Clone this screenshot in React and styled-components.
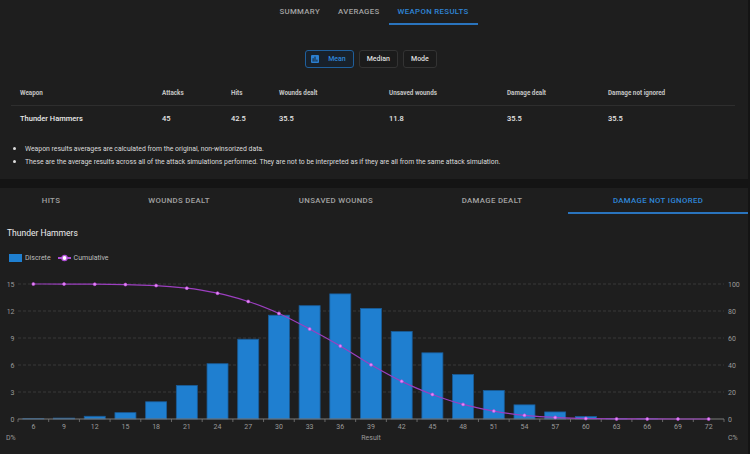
import React from 'react';
import styled, { createGlobalStyle } from 'styled-components';

const blue = '#2f86d8';
const barBlue = '#1f7fd0';
const purple = '#9c3fc0';

const GlobalStyle = createGlobalStyle`
  body {
    margin: 0;
    background: #141414;
    font-family: Roboto, "Liberation Sans", sans-serif;
    color: #e6e6e6;
  }
`;

const Page = styled.div`
  width: 748px;
  display: flex;
  flex-direction: column;
  gap: 9px;
`;

const Card = styled.div`
  background: #1e1e1e;
  height: ${(props) => props.h}px;
  overflow: hidden;
`;

const TopTabs = styled.div`
  display: flex;
  justify-content: center;
  height: 25px;
`;

const Tab = styled.div`
  box-sizing: border-box;
  display: flex;
  align-items: center;
  justify-content: center;
  padding: 0 9px;
  height: 100%;
  font-size: 7.8px;
  font-weight: 500;
  letter-spacing: 0.35px;
  text-transform: uppercase;
  color: ${(props) => (props.active ? blue : '#a3a3a3')};
  border-bottom: 2px solid ${(props) => (props.active ? '#2a74bd' : 'transparent')};
`;

const ToggleRow = styled.div`
  display: flex;
  justify-content: center;
  gap: 5px;
  margin-top: 25px;
  padding-right: 6px;
`;

const Toggle = styled.div`
  box-sizing: border-box;
  height: 18px;
  display: flex;
  align-items: center;
  gap: 9px;
  padding: 0 7px 0 ${(props) => (props.active ? 5 : 7)}px;
  border-radius: 3px;
  border: 1px solid ${(props) => (props.active ? '#1f5f9c' : '#333')};
  background: ${(props) => (props.active ? '#18212b' : '#1b1b1b')};
  color: ${(props) => (props.active ? blue : '#dedede')};
  font-size: 7px;
  font-weight: 500;
`;

const Table = styled.div`
  margin: 12px 0 0 11px;
  width: 724px;
`;

const Row = styled.div`
  display: grid;
  grid-template-columns: 142px 69px 48px 110px 118px 101px 136px;
  height: 26px;
  align-items: center;
  border-bottom: 1px solid ${(props) => (props.head ? '#2e2e2e' : 'transparent')};
  box-sizing: border-box;
`;

const Cell = styled.div`
  padding-left: 9px;
  font-size: ${(props) => (props.head ? 6.3 : 7.5)}px;
  font-weight: ${(props) => (props.head ? 700 : 500)};
  color: ${(props) => (props.head ? '#c4c4c4' : '#e8e8e8')};
  white-space: nowrap;
`;

const Notes = styled.ul`
  margin: 10px 0 0;
  padding-left: 25px;
  font-size: 6.85px;
  line-height: 12px;
  color: #dcdcdc;

  li::marker {
    font-size: 9px;
  }
`;

const ChartTabs = styled.div`
  display: grid;
  grid-template-columns: 102px 154px 160px 152px 180px;
  height: 26px;
`;

const ChartTitle = styled.div`
  margin: 13px 0 0 7px;
  font-size: 8.5px;
  line-height: 12px;
  color: #eeeeee;
`;

const Legend = styled.div`
  display: flex;
  align-items: center;
  gap: 3px;
  margin: 14px 0 0 9px;
  height: 10px;
  font-size: 7px;
  color: #bdbdbd;
`;

const Swatch = styled.span`
  width: 13px;
  height: 8px;
  background: ${barBlue};
`;

const LegendGap = styled.span`
  width: 1px;
`;

const ChartSvg = styled.svg`
  display: block;
  margin-top: 5px;
  font-family: Roboto, "Liberation Sans", sans-serif;
`;

const rawBars = [0.04, 0.1, 0.3, 0.7, 1.9, 3.7, 6.1, 8.8, 11.45, 12.5, 13.8, 12.2, 9.65, 7.3, 4.9, 3.15, 1.56, 0.78, 0.27, 0.06, 0.02, 0, 0];
const total = rawBars.reduce((a, b) => a + b, 0);
const bars = rawBars.map((v) => (v * 100) / total);
const cumulative = bars.map((_, i) => bars.slice(i).reduce((a, b) => a + b, 0));

const X0 = 18;
const X1 = 724;
const Y0 = 419;
const band = (X1 - X0) / bars.length;
const leftY = (v) => Y0 - v * 9;
const rightY = (v) => Y0 - v * 1.35;
const cx = (i) => X0 + band * (i + 0.5);

function monotonePath(pts) {
  const n = pts.length;
  const dx = [];
  const m = [];
  for (let i = 0; i < n - 1; i++) {
    dx[i] = pts[i + 1][0] - pts[i][0];
    m[i] = (pts[i + 1][1] - pts[i][1]) / dx[i];
  }
  const t = [m[0]];
  for (let i = 1; i < n - 1; i++) {
    if (m[i - 1] * m[i] <= 0) t[i] = 0;
    else t[i] = (3 * (dx[i - 1] + dx[i])) / ((2 * dx[i] + dx[i - 1]) / m[i - 1] + (dx[i] + 2 * dx[i - 1]) / m[i]);
  }
  t[n - 1] = m[n - 2];
  let d = `M${pts[0][0]},${pts[0][1]}`;
  for (let i = 0; i < n - 1; i++) {
    const h = dx[i] / 3;
    d += ` C${pts[i][0] + h},${pts[i][1] + t[i] * h} ${pts[i + 1][0] - h},${pts[i + 1][1] - t[i + 1] * h} ${pts[i + 1][0]},${pts[i + 1][1]}`;
  }
  return d;
}

const MeanIcon = () => (
  <svg width="8" height="8" viewBox="0 0 8 8">
    <rect x="0" y="0" width="8" height="8" rx="1" fill="#2b7fd0" />
    <rect x="1.6" y="3.2" width="1" height="3.4" fill="#16202a" />
    <rect x="3.5" y="1.6" width="1" height="5" fill="#16202a" />
    <rect x="5.4" y="4.6" width="1" height="2" fill="#16202a" />
  </svg>
);

const LegendLine = () => (
  <svg width="13" height="8" viewBox="0 0 13 8">
    <line x1="0" y1="4" x2="13" y2="4" stroke="#b14fd8" strokeWidth="2" />
    <circle cx="6.5" cy="4" r="2.6" fill="#ffffff" stroke="#b14fd8" strokeWidth="1.4" />
  </svg>
);

const Chart = () => {
  const points = cumulative.map((v, i) => [cx(i), rightY(v)]);
  const labelStyle = { fontSize: 7, fill: '#9a9a9a' };
  return (
    <ChartSvg width="748" height="186" viewBox="0 268 748 186">
      {[3, 6, 9, 12, 15].map((v) => (
        <line key={v} x1={X0} x2={X1} y1={leftY(v)} y2={leftY(v)} stroke="#3f3f3f" strokeWidth="0.8" strokeDasharray="3 2" />
      ))}
      {[0, 3, 6, 9, 12, 15].map((v) => (
        <text key={v} x="14.5" y={leftY(v) + 2.5} textAnchor="end" style={labelStyle}>{v}</text>
      ))}
      {[0, 20, 40, 60, 80, 100].map((v) => (
        <text key={v} x="728" y={rightY(v) + 2.5} style={labelStyle}>{v}</text>
      ))}
      {bars.map((v, i) => (
        <rect
          key={i}
          x={cx(i) - 10.5}
          y={Y0 - v * 9}
          width="21"
          height={v * 9}
          fill={barBlue}
          stroke="#1a5c98"
          strokeWidth="0.8"
        />
      ))}
      <line x1={X0} x2={X1} y1={Y0} y2={Y0} stroke="#7a7a7a" strokeWidth="1" />
      {bars.map((_, i) => (
        <line key={i} x1={X0 + band * i} x2={X0 + band * i} y1={Y0} y2={Y0 + 3} stroke="#7a7a7a" strokeWidth="0.8" />
      ))}
      <line x1={X1} x2={X1} y1={Y0} y2={Y0 + 3} stroke="#7a7a7a" strokeWidth="0.8" />
      {bars.map((_, i) => (
        <text key={i} x={cx(i)} y="428.5" textAnchor="middle" style={labelStyle}>{6 + i * 3}</text>
      ))}
      <path d={monotonePath(points)} fill="none" stroke={purple} strokeWidth="1.2" />
      {points.map(([x, y], i) => (
        <circle key={i} cx={x} cy={y} r="1.5" fill="#e88af7" stroke="#c04fe0" strokeWidth="0.6" />
      ))}
      <text x="6" y="440" style={labelStyle}>D%</text>
      <text x="371" y="440" textAnchor="middle" style={labelStyle}>Result</text>
      <text x="728" y="440" style={labelStyle}>C%</text>
    </ChartSvg>
  );
};

const columns = ['Weapon', 'Attacks', 'Hits', 'Wounds dealt', 'Unsaved wounds', 'Damage dealt', 'Damage not ignored'];
const values = ['Thunder Hammers', '45', '42.5', '35.5', '11.8', '35.5', '35.5'];
const chartTabs = ['Hits', 'Wounds dealt', 'Unsaved wounds', 'Damage dealt', 'Damage not ignored'];

export default function App() {
  return (
    <>
      <GlobalStyle />
      <Page>
        <Card h={179}>
          <TopTabs>
            <Tab>Summary</Tab>
            <Tab>Averages</Tab>
            <Tab active>Weapon results</Tab>
          </TopTabs>
          <ToggleRow>
            <Toggle active>
              <MeanIcon />
              Mean
            </Toggle>
            <Toggle>Median</Toggle>
            <Toggle>Mode</Toggle>
          </ToggleRow>
          <Table>
            <Row head>
              {columns.map((c) => (
                <Cell head key={c}>{c}</Cell>
              ))}
            </Row>
            <Row>
              {values.map((v, i) => (
                <Cell key={i}>{v}</Cell>
              ))}
            </Row>
          </Table>
          <Notes>
            <li>Weapon results averages are calculated from the original, non-winsorized data.</li>
            <li>These are the average results across all of the attack simulations performed. They are not to be interpreted as if they are all from the same attack simulation.</li>
          </Notes>
        </Card>
        <Card h={266}>
          <ChartTabs>
            {chartTabs.map((t, i) => (
              <Tab key={t} active={i === 4}>{t}</Tab>
            ))}
          </ChartTabs>
          <ChartTitle>Thunder Hammers</ChartTitle>
          <Legend>
            <Swatch />
            Discrete
            <LegendGap />
            <LegendLine />
            Cumulative
          </Legend>
          <Chart />
        </Card>
      </Page>
    </>
  );
}
